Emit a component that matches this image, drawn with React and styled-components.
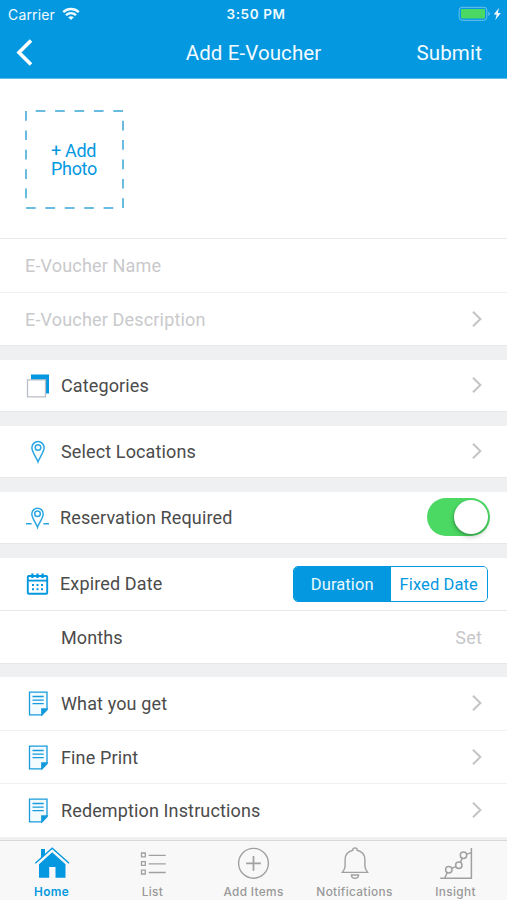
import React, { useState } from "react";
import styled, { createGlobalStyle } from "styled-components";

const BLUE = "#0398df";
const GREY = "#a0a0a0";

const GlobalStyle = createGlobalStyle`
  * { box-sizing: border-box; }
  body { margin: 0; background: #eff0f1; font-family: Roboto, "Liberation Sans", sans-serif; }
  button { font: inherit; padding: 0; border: 0; background: none; color: inherit; }
`;

const Screen = styled.main`
  display: flex;
  flex-direction: column;
  width: 507px;
  height: 900px;
  overflow: hidden;
  background: #eff0f1;
`;

const Header = styled.header`
  flex: none;
  height: 79px;
  background: ${BLUE};
  border-bottom: 1px solid #5cbbea;
  color: #f2fbff;
`;

const StatusBar = styled.div`
  display: grid;
  grid-template-columns: 1fr auto 1fr;
  align-items: center;
  height: 27px;
  padding: 0 5px 0 8px;
  font: 500 13.5px/27px Inter, sans-serif;
`;

const Carrier = styled.div`
  display: flex;
  align-items: center;
  gap: 7px;
  font-weight: 400;
  font-size: 14px;
  letter-spacing: 0.15px;
`;

const Clock = styled.time`
  padding: 1px 0 0 2px;
  font-weight: 600;
  letter-spacing: 0.6px;
`;

const Battery = styled.div`
  display: flex;
  justify-content: flex-end;
`;

const NavBar = styled.nav`
  display: grid;
  grid-template-columns: 1fr auto 1fr;
  align-items: center;
  height: 51px;
  padding: 0 25px 0 16px;
`;

const BackButton = styled.button`
  display: flex;
  width: 18px;
`;

const Title = styled.h1`
  margin: 0 0 0 9px;
  font-size: 20.5px;
  font-weight: 400;
  letter-spacing: 0.1px;
`;

const SubmitButton = styled.button`
  justify-self: end;
  font-size: 20.5px;
  letter-spacing: 0.15px;
`;

const PhotoSection = styled.section`
  flex: none;
  height: 160px;
  padding: 31px 25px;
  background: #fff;
  border-bottom: 1px solid #e9eaeb;
`;

const PhotoButton = styled.button`
  display: grid;
  place-items: center;
  width: 99px;
  height: 99px;
  color: ${BLUE};
  & > * { grid-area: 1 / 1; }
`;

const PhotoText = styled.span`
  padding-right: 1px;
  font-size: 18px;
  line-height: 18px;
  text-align: left;
  letter-spacing: -0.3px;
  white-space: pre-line;
`;

const Group = styled.section`
  flex: none;
  margin-bottom: ${(p) => p.$gap ?? 14}px;
  background: #fff;
`;

const Row = styled.div`
  display: flex;
  align-items: center;
  height: ${(p) => p.$height ?? 52}px;
  padding: ${(p) => p.$top ?? 0}px ${(p) => p.$right ?? 24}px 0 25px;
  border-bottom: 1px solid ${(p) => (p.$soft ? "#f1f1f2" : "#e7e8e9")};
`;

const RowIcon = styled.span`
  display: flex;
  flex: none;
  width: ${(p) => p.$width ?? 36}px;
`;

const Label = styled.span`
  flex: 1;
  font-size: 18px;
  line-height: 22px;
  color: #4b4b4b;
  letter-spacing: 0.13px;
`;

const Placeholder = styled(Label)`
  color: #c9c9cc;
  letter-spacing: 0.17px;
`;

const Value = styled.span`
  font-size: 18px;
  color: #c7c7ca;
  letter-spacing: 0.2px;
  padding-right: 1px;
`;

const Switch = styled.button`
  display: flex;
  justify-content: ${(p) => (p.$on ? "flex-end" : "flex-start")};
  width: 63px;
  height: 38px;
  margin-bottom: 1px;
  padding: 2px;
  border-radius: 19px;
  background: ${(p) => (p.$on ? "#4bd863" : "#e5e5e5")};
`;

const Knob = styled.span`
  width: 34px;
  height: 34px;
  border-radius: 50%;
  background: #fff;
  box-shadow: 0 3px 5px rgba(0, 0, 0, 0.2), -1px 1px 2px rgba(0, 0, 0, 0.15);
`;

const Segments = styled.div`
  display: flex;
  width: 195px;
  height: 36px;
  border: 1px solid ${BLUE};
  border-radius: 5px;
  overflow: hidden;
`;

const Segment = styled.button`
  flex: 1;
  background: ${(p) => (p.$active ? BLUE : "#fff")};
  color: ${(p) => (p.$active ? "#ecf9ff" : BLUE)};
  font-size: 16.5px;
  letter-spacing: 0.1px;
`;

const TabBar = styled.nav`
  flex: none;
  display: grid;
  grid-template-columns: repeat(5, 101px);
  justify-content: center;
  height: 60px;
  background: #f8f8f8;
  border-top: 1px solid #d7d8d9;
`;

const Tab = styled.button`
  display: flex;
  flex-direction: column;
  align-items: center;
  padding-top: 5px;
  font: ${(p) => (p.$active ? 600 : 500)} 11.8px/14px Inter, sans-serif;
  letter-spacing: 0.35px;
  color: ${(p) => (p.$active ? BLUE : "#999")};
  svg { margin-bottom: 5px; }
`;

const ChevronSvg = styled.svg`
  flex: none;
  margin-bottom: 2px;
`;

const WifiIcon = () => (
  <svg width="18" height="14" viewBox="0 0 18 14" fill="none" stroke="#f2fbff" strokeWidth="2.4">
    <path d="M1.2 5.1C5.6.9 12.4.9 16.8 5.1M4 8.2c2.9-2.7 7.1-2.7 10 0" />
    <path d="M9 13 6.2 10.3c1.6-1.5 4-1.5 5.6 0z" fill="#f2fbff" stroke="none" />
  </svg>
);

const BatteryIcon = () => (
  <svg width="44" height="16" viewBox="0 0 44 16">
    <rect x="1.2" y="1.3" width="27.6" height="13" rx="3" fill="none" stroke="#6fc4ed" />
    <rect x="3" y="3" width="24" height="9.6" rx="1" fill="#4bd863" />
    <path d="M30.3 5.5c2 .8 2 3.7 0 4.6z" fill="#6fc4ed" />
    <path d="m41 2-5.3 6.5h3L37.3 14l5.5-6.9h-3z" fill="#f2fbff" />
  </svg>
);

const BackIcon = () => (
  <svg width="18" height="28" viewBox="0 0 18 28" fill="none" stroke="#fff" strokeWidth="3.6">
    <path d="M15 1.5 3 13.5l12 12" />
  </svg>
);

const DashedFrame = () => (
  <svg width="99" height="99" viewBox="0 0 99 99" fill="none" stroke="#3aa5d6" strokeWidth="1.5">
    <path d="M1 1v97h97V1H1" strokeDasharray="9.7 9.7" />
  </svg>
);

const Chevron = () => (
  <ChevronSvg width="12" height="18" viewBox="0 0 12 18" fill="none" stroke="#c4c4c7" strokeWidth="2">
    <path d="m2 1.8 7.4 7.2L2 16.2" />
  </ChevronSvg>
);

const CategoriesIcon = () => (
  <svg width="25" height="26" viewBox="0 0 25 26">
    <path d="M6 1.4h18v19h-4V7H6z" fill={BLUE} />
    <path d="M2.5 6.8h18v17h-18z" fill="#fff" stroke="#b9bdc5" strokeWidth="1.3" />
  </svg>
);

const PinIcon = () => (
  <svg width="25" height="24" viewBox="0 0 25 24" fill="none" stroke="#2aa7e3" strokeWidth="1.5">
    <path d="M13 21.8C11.7 17.8 6.9 12 6.9 7.7a6.1 6.1 0 0 1 12.2 0c0 4.3-4.8 10.1-6.1 14.1z" />
    <circle cx="13" cy="7.5" r="2.8" />
  </svg>
);

const ReservationIcon = () => (
  <svg width="25" height="24" viewBox="0 0 25 24" fill="none" stroke="#2aa7e3" strokeWidth="1.5">
    <path d="M12.5 21.2C11.3 17.5 6.8 12 6.8 7.9a5.7 5.7 0 0 1 11.4 0c0 4.1-4.5 9.6-5.7 13.3z" />
    <circle cx="12.5" cy="7.8" r="2.8" />
    <path d="M1 17.8h5.6M18.4 17.8H24" />
  </svg>
);

const CalendarIcon = () => (
  <svg width="25" height="24" viewBox="0 0 25 24" fill="none" stroke={BLUE}>
    <rect x="2.8" y="4" width="19.4" height="17.8" rx="1" strokeWidth="1.9" />
    <path d="M2.5 8.6h20" strokeWidth="1.8" />
    <path d="M7.4 1.5V6M12.5 1.5V6M17.6 1.5V6" strokeWidth="2.3" />
    <path d="M7 13h2M11.5 13h2M16 13h2M7 17.3h2M11.5 17.3h2M16 17.3h2" strokeWidth="2" />
  </svg>
);

const NoteIcon = () => (
  <svg width="25" height="26" viewBox="0 0 25 26" fill="none" stroke="#189bdc" strokeWidth="1.3">
    <path d="M4.5 1.2H22v17.5l-5 5.2H4.5z" fill="#f3fbff" />
    <path d="M16.8 23.8V18H22z" fill={BLUE} />
    <path d="M7.5 5.5h11.2M7.5 9.1h11.2M7.5 12.7h11.2" />
  </svg>
);

const HomeIcon = () => (
  <svg width="36" height="34" viewBox="0 0 36 34">
    <path d="M7 3h4v5L7 12z" fill={BLUE} />
    <path d="m1.3 17.2 16.9-15 16.9 15" fill="none" stroke={BLUE} strokeWidth="1.3" />
    <path d="m18.2 6.2 13.3 12v13.5h-10V21h-6.3v10.7H5V18.2z" fill={BLUE} />
  </svg>
);

const ListIcon = () => (
  <svg width="36" height="34" viewBox="0 0 36 34" fill="none" stroke={GREY} strokeWidth="1.3">
    <path d="M6.5 7h3.8v3.8H6.5zM6.5 15.6h3.8v3.8H6.5zM6.5 24.2h3.8V28H6.5zM13.7 9.3h17M13.7 17.9h17M13.7 26.5h17" />
  </svg>
);

const AddIcon = () => (
  <svg width="36" height="34" viewBox="0 0 36 34" fill="none" stroke={GREY} strokeWidth="1.4">
    <circle cx="17.5" cy="17.3" r="14.9" />
    <path d="M10.1 17.3h14.8M17.5 9.9v14.8" strokeWidth="1.7" />
  </svg>
);

const BellIcon = () => (
  <svg width="36" height="34" viewBox="0 0 36 34" fill="none" stroke={GREY} strokeWidth="1.4">
    <path d="M15.8 4.2c0-3.1 4.4-3.1 4.4 0 4.8 1.2 7.7 4.7 7.7 9.5v6.5c0 2.2 1 3.8 2.7 6.2H5.4c1.7-2.4 2.7-4 2.7-6.2v-6.5c0-4.8 2.9-8.3 7.7-9.5z" />
    <path d="M14.4 29h7.2c-.3 4.4-6.9 4.4-7.2 0z" />
  </svg>
);

const InsightIcon = () => (
  <svg width="36" height="34" viewBox="0 0 36 34" fill="none" stroke={GREY} strokeWidth="1.5">
    <path d="M2.2 32.3h31.2V2M6.7 32l2.7-5.5M13.8 22.4l4-1.8M22.3 16.6l2-4.6M28.3 8.4l5.1-1.8" />
    <circle cx="10.8" cy="23.7" r="3.2" />
    <circle cx="20.8" cy="19.3" r="3.2" />
    <circle cx="25.5" cy="9.3" r="3.2" />
  </svg>
);

const details = [
  { text: "What you get", height: 54 },
  { text: "Fine Print", height: 53, top: 1 },
  { text: "Redemption Instructions", height: 54 },
];

const tabs = [
  { text: "Home", Icon: HomeIcon },
  { text: "List", Icon: ListIcon },
  { text: "Add Items", Icon: AddIcon },
  { text: "Notifications", Icon: BellIcon },
  { text: "Insight", Icon: InsightIcon },
];

export default function App() {
  const [reserved, setReserved] = useState(true);
  const [mode, setMode] = useState("Duration");
  const [tab, setTab] = useState("Home");
  return (
    <Screen>
      <GlobalStyle />
      <Header>
        <StatusBar>
          <Carrier>Carrier <WifiIcon /></Carrier>
          <Clock>3:50 PM</Clock>
          <Battery><BatteryIcon /></Battery>
        </StatusBar>
        <NavBar>
          <BackButton aria-label="Back"><BackIcon /></BackButton>
          <Title>Add E-Voucher</Title>
          <SubmitButton>Submit</SubmitButton>
        </NavBar>
      </Header>
      <PhotoSection>
        <PhotoButton>
          <DashedFrame />
          <PhotoText>{"+ Add\nPhoto"}</PhotoText>
        </PhotoButton>
      </PhotoSection>
      <Group>
        <Row $height={54} $soft><Placeholder>E-Voucher Name</Placeholder></Row>
        <Row $height={53} $top={2}><Placeholder>E-Voucher Description</Placeholder><Chevron /></Row>
      </Group>
      <Group>
        <Row><RowIcon><CategoriesIcon /></RowIcon><Label>Categories</Label><Chevron /></Row>
      </Group>
      <Group>
        <Row><RowIcon><PinIcon /></RowIcon><Label>Select Locations</Label><Chevron /></Row>
      </Group>
      <Group>
        <Row $right={17}>
          <RowIcon $width={35}><ReservationIcon /></RowIcon>
          <Label>Reservation Required</Label>
          <Switch $on={reserved} role="switch" aria-checked={reserved} aria-label="Reservation Required" onClick={() => setReserved(!reserved)}><Knob /></Switch>
        </Row>
      </Group>
      <Group $gap={13}>
        <Row $height={53} $right={19}>
          <RowIcon $width={35}><CalendarIcon /></RowIcon>
          <Label>Expired Date</Label>
          <Segments>
            {["Duration", "Fixed Date"].map((name) => (
              <Segment key={name} $active={mode === name} onClick={() => setMode(name)}>{name}</Segment>
            ))}
          </Segments>
        </Row>
        <Row $height={53} $top={1}><RowIcon /><Label>Months</Label><Value>Set</Value></Row>
      </Group>
      <Group $gap={2}>
        {details.map(({ text, height, top }) => (
          <Row key={text} $height={height} $top={top} $soft>
            <RowIcon><NoteIcon /></RowIcon><Label>{text}</Label><Chevron />
          </Row>
        ))}
      </Group>
      <TabBar>
        {tabs.map(({ text, Icon }) => (
          <Tab key={text} $active={tab === text} onClick={() => setTab(text)}><Icon />{text}</Tab>
        ))}
      </TabBar>
    </Screen>
  );
}
